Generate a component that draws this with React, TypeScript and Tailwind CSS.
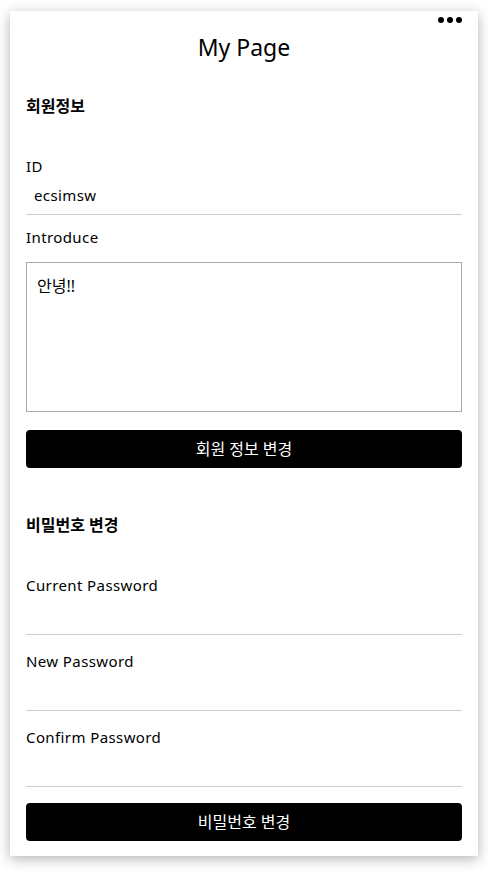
import { useState } from "react";

const font = "font-['Noto_Sans','Noto_Sans_CJK_KR',sans-serif]";
const label = "h-5 leading-5 text-[15px] tracking-[0.4px] text-black";
const heading = "h-5 leading-5 text-[16px] font-bold text-black";
const underline =
  "block w-full border-b border-[#cccccc] px-2 text-[15px] tracking-[0.4px] text-black outline-none bg-transparent";
const button =
  "w-full h-[38px] rounded bg-black text-white text-[16px] leading-[38px] text-center";

export default function App() {
  const [id] = useState("ecsimsw");
  const [intro, setIntro] = useState("안녕!!");

  return (
    <div className={`${font} w-[489px] h-[879px] bg-white pt-[11px] pl-[10px]`}>
      <div className="relative w-[468px] h-[845px] bg-white px-4 shadow-[0_3px_12px_rgba(0,0,0,0.3)]">
        <button className="absolute right-4 top-[6px] flex gap-[3px]">
          <span className="w-[6px] h-[6px] rounded-full bg-black" />
          <span className="w-[6px] h-[6px] rounded-full bg-black" />
          <span className="w-[6px] h-[6px] rounded-full bg-black" />
        </button>

        <h1 className="pt-5 h-[52px] text-center text-[23px] leading-8 text-black">
          My Page
        </h1>

        <h2 className={`${heading} mt-[33px]`}>회원정보</h2>

        <div className={`${label} mt-10`}>ID</div>
        <input className={`${underline} h-[39px]`} value={id} readOnly />

        <div className={`${label} mt-3`}>Introduce</div>
        <textarea
          className="mt-[15px] block w-full h-[150px] border border-[#a9a9a9] px-[10px] py-[13px] text-[16px] leading-5 text-black outline-none resize-none"
          value={intro}
          onChange={(e) => setIntro(e.target.value)}
        />

        <button className={`${button} mt-[18px]`}>회원 정보 변경</button>

        <h2 className={`${heading} mt-[47px]`}>비밀번호 변경</h2>

        <div className={`${label} mt-10`}>Current Password</div>
        <input type="password" className={`${underline} h-10`} />

        <div className={`${label} mt-4`}>New Password</div>
        <input type="password" className={`${underline} h-10`} />

        <div className={`${label} mt-4`}>Confirm Password</div>
        <input type="password" className={`${underline} h-10`} />

        <button className={`${button} mt-4`}>비밀번호 변경</button>
      </div>
    </div>
  );
}
